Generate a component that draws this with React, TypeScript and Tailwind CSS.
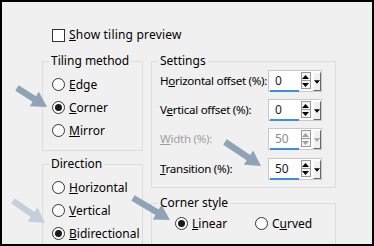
import React from 'react';

const font = { fontFamily: '"Noto Sans", "Open Sans", sans-serif' };

const Radio: React.FC<{ checked?: boolean }> = ({ checked }) => (
  <span className="w-[13px] h-[13px] shrink-0 rounded-full border border-[#333] bg-white flex items-center justify-center">
    {checked && <span className="w-[7px] h-[7px] rounded-full bg-[#1a1a1a]" />}
  </span>
);

const RadioRow: React.FC<{ checked?: boolean; children: React.ReactNode }> = ({ checked, children }) => (
  <div className="h-[23px] flex items-center gap-[4px]">
    <Radio checked={checked} />
    <span className="leading-none whitespace-nowrap">{children}</span>
  </div>
);

const Group: React.FC<{ title: string; className?: string; children: React.ReactNode }> = ({
  title,
  className,
  children,
}) => (
  <fieldset className={`border border-[#dcdcdc] ${className ?? ''}`}>
    <legend className="ml-[6px] px-[2px] h-[16px] leading-[16px]">{title}</legend>
    {children}
  </fieldset>
);

const Tri: React.FC<{ up?: boolean; color: string }> = ({ up, color }) => (
  <svg width="7" height="4" viewBox="0 0 7 4">
    <polygon points={up ? '0,4 7,4 3.5,0' : '0,0 7,0 3.5,4'} fill={color} />
  </svg>
);

const SpinBox: React.FC<{ value: string; disabled?: boolean }> = ({ value, disabled }) => {
  const c = disabled ? '#a0a0a0' : '#000';
  return (
    <div className="w-[54px] h-[22px] shrink-0 border border-[#c8c8c8] bg-white flex items-start pt-[1px] pl-[1px]">
      <div className="w-[32px] h-[20px] flex flex-col">
        <span className={`flex-1 pl-[5px] leading-[18px] ${disabled ? 'text-[#8c8c8c]' : 'text-[#1c1c1c]'}`}>
          {value}
        </span>
        <span className="h-[2px] mr-[1px] bg-[#3b8ee6]" />
      </div>
      <div className="w-[11px] h-[17px] ml-[1px] flex flex-col border border-[#9a9a9a] bg-[#f4f4f4]">
        <span className="flex-1 flex items-center justify-center border-b border-[#9a9a9a]">
          <Tri up color={c} />
        </span>
        <span className="flex-1 flex items-center justify-center">
          <Tri color={c} />
        </span>
      </div>
      <div className="w-[8px] h-[19px] ml-[2px] bg-[#f0f0f0] border-r border-b border-[#6a6a6a] border-l border-t border-l-white border-t-white flex items-center justify-center">
        <Tri color={c} />
      </div>
    </div>
  );
};

const SettingRow: React.FC<{ label: React.ReactNode; value: string; disabled?: boolean; className?: string }> = ({
  label,
  value,
  disabled,
  className,
}) => (
  <div className={`flex items-center h-[22px] ${className ?? ''}`}>
    <span
      className={`w-[108px] shrink-0 whitespace-nowrap text-[11.6px] tracking-[-0.3px] ${
        disabled ? 'text-[#a0a0a0]' : ''
      }`}
    >
      {label}
    </span>
    <SpinBox value={value} disabled={disabled} />
  </div>
);

function arrow(x1: number, y1: number, x2: number, y2: number) {
  const dx = x2 - x1;
  const dy = y2 - y1;
  const len = Math.hypot(dx, dy);
  const ux = dx / len;
  const uy = dy / len;
  const nx = -uy;
  const ny = ux;
  const head = 15;
  const sw = 3.2;
  const hw = 8.5;
  const bx = x2 - ux * head;
  const by = y2 - uy * head;
  const pts = [
    [x1 + nx * sw, y1 + ny * sw],
    [bx + nx * sw, by + ny * sw],
    [bx + nx * hw, by + ny * hw],
    [x2, y2],
    [bx - nx * hw, by - ny * hw],
    [bx - nx * sw, by - ny * sw],
    [x1 - nx * sw, y1 - ny * sw],
  ];
  return pts.map((p) => `${p[0].toFixed(1)},${p[1].toFixed(1)}`).join(' ');
}

export default function App() {
  return (
    <div
      className="relative w-[374px] h-[246px] overflow-hidden bg-[#f0f0f0] border-2 border-black text-[12px] text-black"
      style={font}
    >
      <div className="pl-[40px] pt-[25px]">
        <div className="ml-[10px] h-[16px] flex items-center gap-[4px]">
          <span className="w-[13px] h-[13px] border border-[#333] bg-white" />
          <span className="tracking-[0.2px]">
            <u>S</u>how tiling preview
          </span>
        </div>

        <div className="mt-[10px] flex gap-[8px] items-start">
          <div className="w-[101px] flex flex-col">
            <Group title="Tiling method">
              <div className="pl-[9px] pt-[4px] pb-[8px]">
                <RadioRow>
                  <u>E</u>dge
                </RadioRow>
                <RadioRow checked>
                  <u>C</u>orner
                </RadioRow>
                <RadioRow>
                  <u>M</u>irror
                </RadioRow>
              </div>
            </Group>
            <Group title="Direction" className="mt-[5px]">
              <div className="pl-[9px] pt-[4px] pb-[20px]">
                <RadioRow>
                  <u>H</u>orizontal
                </RadioRow>
                <RadioRow>
                  <u>V</u>ertical
                </RadioRow>
                <RadioRow checked>
                  <u>B</u>idirectional
                </RadioRow>
              </div>
            </Group>
          </div>

          <div className="w-[185px] flex flex-col">
            <Group title="Settings">
              <div className="pl-[8px] pt-[1px] pb-[7px]">
                <SettingRow
                  label={
                    <>
                      H<u>o</u>rizontal offset (%):
                    </>
                  }
                  value="0"
                />
                <SettingRow
                  className="mt-[7px]"
                  label={
                    <>
                      V<u>e</u>rtical offset (%):
                    </>
                  }
                  value="0"
                />
                <SettingRow
                  className="mt-[7px]"
                  disabled
                  label={
                    <>
                      <u>W</u>idth (%):
                    </>
                  }
                  value="50"
                />
                <SettingRow
                  className="mt-[8px]"
                  label={
                    <>
                      <u>T</u>ransition (%):
                    </>
                  }
                  value="50"
                />
              </div>
            </Group>
            <Group title="Corner style" className="mt-[7px]">
              <div className="pl-[23px] pt-[1px] pb-[20px] flex">
                <div className="w-[80px]">
                  <RadioRow checked>
                    <u>L</u>inear
                  </RadioRow>
                </div>
                <RadioRow>
                  C<u>u</u>rved
                </RadioRow>
              </div>
            </Group>
          </div>
        </div>
      </div>

      <svg className="absolute left-[-2px] top-[-2px] pointer-events-none" width="374" height="246">
        <polygon points={arrow(17, 88, 47, 107)} fill="#8fa2b6" />
        <polygon points={arrow(13, 201, 45, 223)} fill="#c3cfdb" />
        <polygon points={arrow(133, 198, 170, 220)} fill="#8fa2b6" />
        <polygon points={arrow(225, 142, 261, 166)} fill="#8fa2b6" />
      </svg>
    </div>
  );
}
